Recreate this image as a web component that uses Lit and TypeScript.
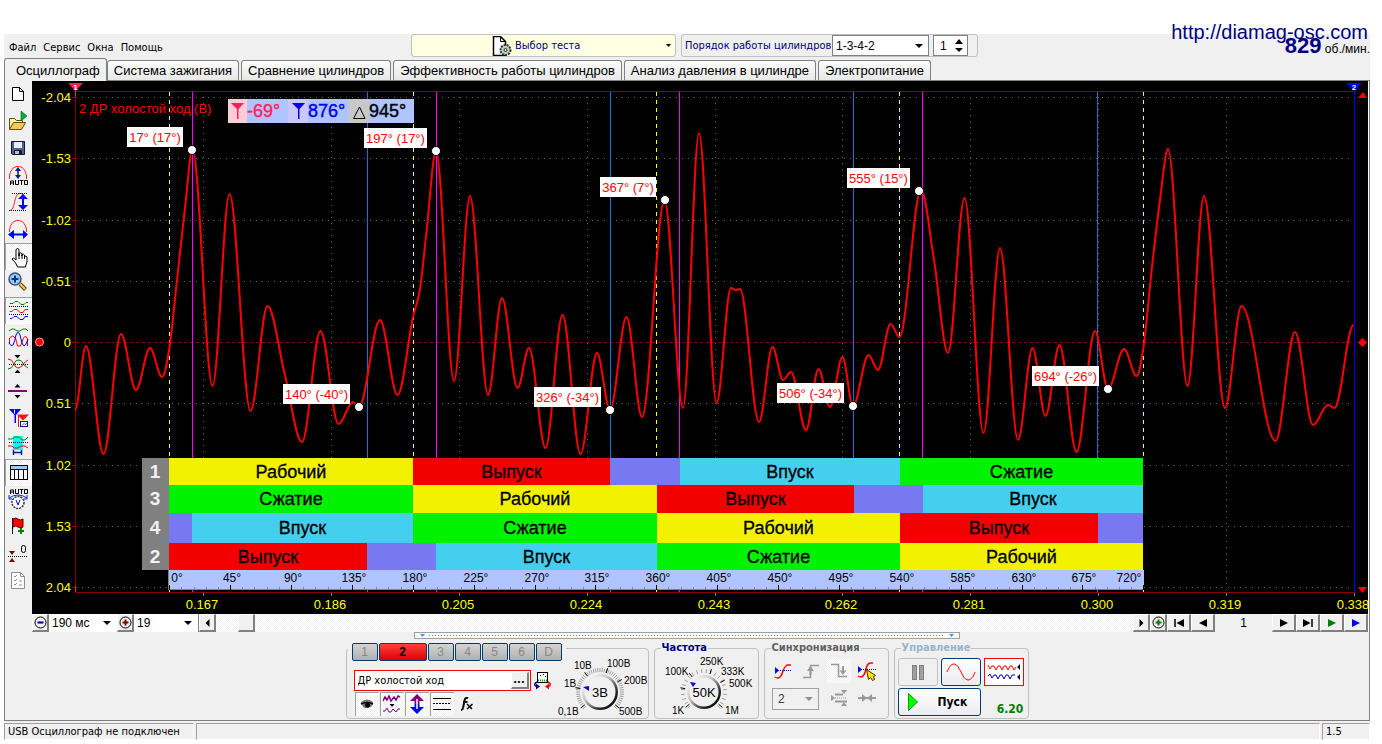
import { LitElement, html, svg, css } from "lit";
import { customElement } from "lit/decorators.js";
import { classMap } from "lit/directives/class-map.js";

type Point = [number, number];

/* Sampled turning points of the sensor voltage, in chart units. */
const TRACE: Point[] = [
  [75, 410], [86, 346], [103.5, 454], [121, 334], [136, 390], [150, 348], [162, 377],
  [169.5, 347], [177, 280], [185.5, 203], [192.5, 149], [212.5, 386], [229.5, 194], [250.5, 411],
  [267.5, 306], [284.5, 373], [302, 442], [320.5, 331], [338.5, 424], [353, 402], [359, 407],
  [380, 320], [397.5, 395], [413, 317], [420, 289], [427, 227], [436, 151], [454, 381],
  [470, 196], [488, 395], [502, 298], [517.5, 388], [529, 348], [545.5, 448], [562.5, 315],
  [580.5, 454], [597, 353], [610, 410], [626.5, 317], [642, 417], [664.5, 200], [683, 408],
  [699, 133], [716.5, 403], [731, 288], [735.5, 290], [740, 289], [759, 422], [772.5, 347],
  [783, 380], [791, 372], [806, 430], [818.5, 369], [830, 407], [842.5, 357], [853, 406],
  [868.5, 355], [878, 370], [890.5, 324], [899.5, 337], [921, 190], [934, 260], [948, 353],
  [964.5, 198], [983.5, 433], [1000, 248], [1018, 440], [1032.5, 348], [1045.5, 416],
  [1059.5, 345], [1076.5, 452], [1095, 331], [1108, 389], [1124, 349], [1136.5, 376],
  [1143.5, 347], [1152, 267], [1160, 200], [1168, 149], [1187.5, 386], [1204, 196],
  [1225, 408], [1241.5, 306], [1275.5, 441], [1295, 332], [1313, 425], [1328, 405],
  [1334.5, 408], [1353.5, 325],
];

/* Smooth path that is level at every peak and trough. */
function smooth(pts: Point[]): string {
  const slope = pts.map((p, i) => {
    if (i === 0 || i === pts.length - 1) return 0;
    const a = (p[1] - pts[i - 1][1]) / (p[0] - pts[i - 1][0]);
    const b = (pts[i + 1][1] - p[1]) / (pts[i + 1][0] - p[0]);
    return a * b <= 0 ? 0 : (a + b) / 2;
  });
  let d = `M${pts[0][0]} ${pts[0][1]}`;
  for (let i = 1; i < pts.length; i++) {
    const [x0, y0] = pts[i - 1];
    const [x1, y1] = pts[i];
    const h = (x1 - x0) * 0.35;
    d += `C${x0 + h} ${y0 + slope[i - 1] * h} ${x1 - h} ${y1 - slope[i] * h} ${x1} ${y1}`;
  }
  return d;
}

const CALLOUTS = [
  { x: 127, y: 127, w: 56, t: "17° (17°)", px: 192, py: 150 },
  { x: 364, y: 128, w: 63, t: "197° (17°)", px: 436, py: 151 },
  { x: 600, y: 177, w: 56, t: "367° (7°)", px: 665, py: 200 },
  { x: 847, y: 168, w: 63, t: "555° (15°)", px: 919, py: 191 },
  { x: 283, y: 384, w: 67, t: "140° (-40°)", px: 359, py: 407 },
  { x: 534, y: 387, w: 67, t: "326° (-34°)", px: 610, py: 410 },
  { x: 777, y: 383, w: 67, t: "506° (-34°)", px: 853, py: 406 },
  { x: 1032, y: 366, w: 67, t: "694° (-26°)", px: 1108, py: 389 },
];

const WORK = { t: "Рабочий", c: "#f2f200" };
const EXHAUST = { t: "Выпуск", c: "#f20000" };
const INTAKE = { t: "Впуск", c: "#45cfee" };
const COMPRESS = { t: "Сжатие", c: "#00f200" };
const OVERLAP = { t: "", c: "#7878f0" };
const PHASES = [
  { n: "1", y: 458, h: 27, cells: [[169, 413, WORK], [413, 610, EXHAUST], [610, 680, OVERLAP], [680, 900, INTAKE], [900, 1143, COMPRESS]] },
  { n: "3", y: 485, h: 28, cells: [[169, 413, COMPRESS], [413, 657, WORK], [657, 854, EXHAUST], [854, 923, OVERLAP], [923, 1143, INTAKE]] },
  { n: "4", y: 513, h: 30, cells: [[169, 192, OVERLAP], [192, 413, INTAKE], [413, 657, COMPRESS], [657, 900, WORK], [900, 1098, EXHAUST], [1098, 1143, OVERLAP]] },
  { n: "2", y: 543, h: 27, cells: [[169, 367, EXHAUST], [367, 436, OVERLAP], [436, 657, INTAKE], [657, 900, COMPRESS], [900, 1143, WORK]] },
] as { n: string; y: number; h: number; cells: [number, number, { t: string; c: string }][] }[];

const range = (n: number) => Array.from({ length: n }, (_, i) => i);
const degX = (deg: number) => 169.2 + deg * 1.353;

@customElement("scope-chart")
class ScopeChart extends LitElement {
  static styles = css`
    :host { display: block; background: #000; }
    .plot { display: block; width: 100%; height: auto; font-family: "Liberation Sans", Arial, sans-serif; font-size: 13px; }
    .crisp { shape-rendering: crispEdges; }
    .dots { stroke: #5c5c5c; stroke-dasharray: 1 5; }
    .frame { stroke: #8b0000; fill: none; }
    .zero { stroke: #880000; stroke-dasharray: 3 3; }
    .scale { fill: #ffff00; }
    .end { text-anchor: end; }
    .mid { text-anchor: middle; }
    .tdc { stroke: #ffff00; stroke-dasharray: 4 4; }
    .open { stroke: #ff00ff; }
    .close { stroke: #0a78e0; }
    .trace { fill: none; stroke: #ff0000; stroke-width: 2; stroke-linejoin: round; }
    .red { fill: #ff0000; }
    .phase { font-size: 18px; text-anchor: middle; fill: #000; stroke: #000; stroke-width: 0.3; }
    .cyl { font-size: 19px; font-weight: bold; text-anchor: middle; fill: #f2f2f2; }
    .deg { font-size: 12px; text-anchor: middle; fill: #000; }
    .read { font-size: 18px; stroke-width: 0.4; }
    .flag { font-size: 8px; font-weight: bold; fill: #fff; text-anchor: middle; }
  `;

  private vline(x: number, cls: string) {
    return svg`<path class="crisp ${cls}" d="M${x} 92V458M${x} 589V592" />`;
  }

  render() {
    return html`<svg class="plot" viewBox="32 81 1336 533" role="img" aria-label="Осциллограмма">
      <rect x="32" y="81" width="1336" height="533" fill="#000" />
      ${range(9).map((i) => {
        const y = Math.round(97 + i * 61.25) + 0.5;
        return i === 4 ? null : svg`<path class="crisp dots" d="M76 ${y}H1354" />`;
      })}
      ${range(10).map((i) => svg`<path class="crisp dots" d="M${Math.round(203.3 + i * 127.8) + 0.5} 97V592" />`)}
      <path class="crisp zero" d="M76 342.5H1354" />
      <path class="crisp frame" d="M75.5 91.5H1354V592.5H75.5Z" />
      ${["-2.04", "-1.53", "-1.02", "-0.51", "0", "0.51", "1.02", "1.53", "2.04"].map((t, i) => {
        const y = Math.round(97 + i * 61.25);
        return svg`<path class="crisp" stroke="#8b0000" d="M72 ${y + 0.5}H78" />
          <text class="scale end" x="71" y=${y + 5}>${t}</text>`;
      })}
      ${["0.167", "0.186", "0.205", "0.224", "0.243", "0.262", "0.281", "0.300", "0.319", "0.338"].map((t, i) => {
        const x = Math.round(203.3 + i * 127.8);
        return svg`<path class="crisp" stroke="#808080" d="M${x + 0.5} 593V596" />
          <text class="scale mid" x=${x - 1} y="609">${t}</text>`;
      })}
      ${[169.5, 413.5, 656.5, 899.5, 1143.5].map((x) => this.vline(x, "tdc"))}
      ${[192.5, 436.5, 679.5, 922.5].map((x) => this.vline(x, "open"))}
      ${[367.5, 610.5, 853.5, 1097.5].map((x) => this.vline(x, "close"))}
      <path class="trace" d=${smooth(TRACE)} />
      <text class="red" x="79" y="113">2 ДР холостой ход (В)</text>

      <g class="crisp">
        <rect x="228" y="99" width="186" height="24" fill="#b0c4ff" />
        <rect x="228" y="99" width="19" height="24" fill="#ffccd8" />
        <rect x="288" y="99" width="20" height="24" fill="#c8c8ff" />
        <rect x="349" y="99" width="20" height="24" fill="#c8c8c8" />
      </g>
      <path d="M231 103H244L238.500 109V119H237V109Z" fill="#ff1e5a" />
      <path d="M292 103H305L299.500 109V119H298V109Z" fill="#0000f0" />
      <path d="M353.500 118.500H365L359.500 107Z" fill="none" stroke="#000" />
      <text class="read" x="247" y="117" fill="#ff1e5a" stroke="#ff1e5a">-69°</text>
      <text class="read" x="308" y="117" fill="#0000f0" stroke="#0000f0">876°</text>
      <text class="read" x="369" y="117" fill="#000" stroke="#000">945°</text>

      ${CALLOUTS.map((c) => svg`
        <rect class="crisp" x=${c.x} y=${c.y} width=${c.w} height="20" fill="#fff" />
        <text class="red mid" x=${c.x + c.w / 2} y=${c.y + 15}>${c.t}</text>
        <circle cx=${c.px} cy=${c.py} r="4.500" fill="#fff" stroke="#000" />`)}

      <rect class="crisp" x="142" y="458" width="27" height="112" fill="#808080" />
      ${PHASES.map((r) => svg`
        ${r.cells.map(([a, b, k]) => svg`
          <rect class="crisp" x=${a} y=${r.y} width=${b - a} height=${r.h} fill=${k.c} />
          ${k.t ? svg`<text class="phase" x=${(a + b) / 2} y=${Math.round(r.y + r.h / 2) + 6}>${k.t}</text>` : null}`)}
        <text class="cyl" x="155" y=${Math.round(r.y + r.h / 2) + 6}>${r.n}</text>`)}
      <rect class="crisp" x="168" y="570" width="976" height="20" fill="#b0c4ff" />
      <path class="crisp" stroke="#808080" d="M168 589.500H1144M168.500 570V590" />
      ${range(81).map((i) => i % 5 === 0
        ? svg`<path class="crisp" stroke="#000" d="M${Math.round(degX(i * 9)) + 0.5} 585V590" />`
        : svg`<path class="crisp" stroke="#808080" d="M${Math.round(degX(i * 9)) + 0.5} 587V590" />`)}
      ${range(17).map((i) => {
        const x = i === 0 ? 177 : i === 16 ? 1129 : Math.round(degX(i * 45)) + 2;
        return svg`<text class="deg" x=${x} y="582">${i * 45}°</text>`;
      })}

      <path class="crisp" stroke="#ff1e5a" d="M75.500 90V97M75.500 586V592" />
      <path d="M68 83H83L75.500 91Z" fill="#ff1e5a" />
      <text class="flag" x="75.500" y="90">1</text>
      <rect class="crisp" x="1354" y="90" width="1" height="502" fill="#0000ff" />
      <path d="M1346 83H1362L1354 91Z" fill="#0000ff" />
      <text class="flag" x="1354" y="90">2</text>
      <path d="M1358 98L1363 92L1367 98ZM1358 587H1367L1362.500 593ZM1358 342.500L1362.500 338L1367 342.500L1362.500 347Z" fill="#ff0000" />
      <circle cx="39.500" cy="342" r="4" fill="#ff0000" stroke="#ff9c9c" />
    </svg>`;
  }
}

/* Icons of the side bar, each drawn on a 27 by 27 cell. */
const autoWord = (y: number) => svg`<path fill="none" stroke="#000" d="M5.500 ${y + 5}v-4h3v4M5.500 ${y + 3}h3M10.500 ${y}v4.500h3v-4.500M14.500 ${y + 0.5}h4M16.500 ${y}v5M19.500 ${y + 0.5}h3v4h-3z"/>`;
const dotted = (y: number) => svg`<path stroke="#000" stroke-dasharray="1 1" d="M4 ${y}H23"/>`;
const ICONS = [
  { n: "Новый", g: svg`<path d="M7.500 6.500h7l4 4v9h-11z" fill="#fff" stroke="#000"/><path d="M14.500 6.500v4h4" fill="none" stroke="#000"/>` },
  { n: "Открыть", g: svg`<path d="M4.500 21.500v-11h5l2 2h6v3" fill="#fff0a0" stroke="#605010"/><path d="M4.500 21.500l4-7h12l-4 7z" fill="#f0cc60" stroke="#605010"/><path d="M16 3v10l6-5z" fill="#00b030" stroke="#006010" stroke-width=".6"/>` },
  { n: "Сохранить", g: svg`<path d="M6.500 6.500h13v13h-12l-1-1z" fill="#50608c" stroke="#101830"/><path d="M9 7h8v6h-8z" fill="#e8f0ff"/><path d="M9.500 15.500h7v4h-7z" fill="#c0c0c0" stroke="#101830"/><path d="M14 16h2v3h-2z" fill="#101830"/>` },
  { n: "Авто", g: svg`<path d="M4.500 17v-3q1-8 7-9.500h3q6 1.500 7 9.500v3" fill="none" stroke="#ff2020"/><path d="M13 6v9" stroke="#001890" stroke-width="1.500"/><path d="M10 9l3-4 3 4zM10 13l3 4 3-4z" fill="#001890"/>${autoWord(18)}` },
  { n: "Амплитуда", g: svg`<path d="M4 21.500h1c5 0 4-16 9-17h2q2 0 3 2" fill="none" stroke="#ff2020"/><path stroke="#000" stroke-dasharray="1 1" d="M7 4.500H22M4 21.500H22"/><path d="M18 8v10" stroke="#0000f0" stroke-width="2"/><path d="M13 10l5-5 5 5zM13 16l5 5 5-5z" fill="#0000f0"/>` },
  { n: "Период", g: svg`<path d="M4.500 16v-2q1-8 7-9.500h3q6 1.500 7 9.500v2" fill="none" stroke="#ff2020"/><path d="M8 18.500h11" stroke="#0000f0" stroke-width="2"/><path d="M9 14v9l-6-4.500zM18 14v9l5-4.500z" fill="#0000f0"/>` },
  { n: "Рука", on: true, g: svg`<path d="M11 17V6.500q1.500-2 3 0V13v-2.500q1.500-1.500 3 0V13v-1.500q1.500-1 2.500.5v1.500q1.500-1 2.500.5v5q-1 2-1.500 5h-8q-1-4-5.500-8 1-2.500 4 1z" fill="#fff" stroke="#000"/><path d="M14 10v6M17 12v4M19.500 13v3" stroke="#000"/>` },
  { n: "Лупа", g: svg`<path d="M15 14l5.500 5.500" stroke="#604800" stroke-width="4"/><path d="M15 14l5 5" stroke="#e8c860" stroke-width="2"/><circle cx="10" cy="9" r="6" fill="#90d0f8" stroke="#405070" stroke-width="1.500"/><path d="M10 5.500v7M6.500 9h7" stroke="#003090" stroke-width="2"/>` },
  { n: "Раздельно", on: true, g: svg`<path d="M5 6.500l3 0 2-2h3l3 3h3l2-2h2" fill="none" stroke="#008000"/><path d="M5 14.500h2l2-2h3l3 3h3l2-3h3" fill="none" stroke="#ff0000"/><path d="M5 21.500h2l2-2h3l3 3h3l2-3h3" fill="none" stroke="#0000ff"/>${dotted(9.500)}${dotted(17.500)}` },
  { n: "Совместно", g: svg`<path d="M4 7l3-2h2l3 2h3l3-2h3l2 2" fill="none" stroke="#008000"/><path d="M4.500 20v-6l3-2 3 2 2 8h3l3-8 2-2 2 3v7" fill="none" stroke="#ff0000"/><path d="M4 18q1.500 5 4 3 2-4 3-10 2-5 4 0l2 8q2 5 4 1l2-5" fill="none" stroke="#0000ff"/>` },
  { n: "Сжать по вертикали", g: svg`<path d="M3 8q4 0 6 5t5 4q3-1 5-5l4-3" fill="none" stroke="#ff0000"/><path d="M3 18q4 0 6-5t5-4q3 0 5 5l4 3" fill="none" stroke="#008000"/>${dotted(13.500)}<path d="M9.500 4h6l-3 3.500zM9.500 22h6l-3-3.500z"/>` },
  { n: "Раздвинуть", g: svg`<path d="M3 13h19" stroke="#800080" stroke-width="2"/><path d="M9.500 9.500h6l-3-3.500zM9.500 17h6l-3 3.500z"/>` },
  { n: "Маркеры", g: svg`<path d="M12 9.500h12l-6 6z" fill="#ff1010"/><path d="M13.500 10v12" stroke="#ff1010"/><path d="M4 4h12l-5 6v8h-1.500v-8z" fill="#0000ff"/><path d="M9.500 4.500v4" stroke="#fff"/><rect x="15.500" y="16.500" width="7" height="5" fill="#fff" stroke="#001890"/><path d="M17 20.500l2-2 1 1 2-1" fill="none" stroke="#555"/>` },
  { n: "Измерение", g: svg`<path d="M8 4h10v14H8z" fill="#00ffff"/><path d="M3 7h4l3-2h4l3 3h3l3-3" fill="none" stroke="#008000"/><path d="M3 14h4l2 2h4l3-2h4l3 2" fill="none" stroke="#ff0000"/>${dotted(10.500)}<path d="M8 20.500h9M8.500 18v5M16.500 18v5" stroke="#001890" stroke-width="1.500"/>` },
  { n: "Таблица", on: true, g: svg`<rect x="5.500" y="6.500" width="17" height="14" fill="#fff" stroke="#000"/><path d="M6 7h16v3H6z" fill="#a0c8ff"/><path d="M5 10.500h18M9.500 10v10M13.500 10v10M18.500 10v10" stroke="#000"/>` },
  { n: "Автонастройка", g: svg`${autoWord(3)}<path d="M4 12q9-6 18 0M4 9v4h3M22 9v4h-3" fill="none" stroke="#0030c0"/><circle cx="13" cy="16.500" r="6" fill="#fff" stroke="#333" stroke-dasharray="2 1" stroke-width="1.500"/><path d="M11 14l2 5 2-5" fill="none" stroke="#0000ff"/>` },
  { n: "Флаг", g: svg`<path d="M7.500 5v16" stroke="#000"/><path d="M8 6q3-2 5 0t5 0v8q-3 2-5 0t-5 0z" fill="#ff0000" stroke="#600000"/><path d="M16 15v6M13 18h6" stroke="#008000" stroke-width="2"/>` },
  { n: "Ноль", g: svg`<path d="M4 11h6l-3 4zM4 22h6l-3-4z" fill="#800000"/><path stroke="#000" stroke-dasharray="1 1" d="M3 16.500H22"/><rect x="16.500" y="5.500" width="4" height="7" rx="2" fill="none" stroke="#000"/>` },
  { n: "Отчёт", g: svg`<path d="M6.500 5.500h9l4 4v12h-13z" fill="#fff" stroke="#909090"/><path d="M15.500 5.500v4h4M9 9l1 1 2-2M9 13l1 1 2-2M9 17l1 1 2-2M14 14h3M14 18h3" fill="none" stroke="#909090"/>` },
];

const CHANNELS = ["1", "2", "3", "4", "5", "6", "D"];
const TABS = ["Осциллограф", "Система зажигания", "Сравнение цилиндров", "Эффективность работы цилиндров", "Анализ давления в цилиндре", "Электропитание"];

type Mark = { t: string; x: number; y: number };
const V_MARKS: Mark[] = [
  { t: "0,1В", x: 559, y: 715 }, { t: "1В", x: 565, y: 687 }, { t: "10В", x: 575, y: 669 },
  { t: "100В", x: 608, y: 667 }, { t: "200В", x: 625, y: 684 }, { t: "500В", x: 620, y: 715 },
];
const F_MARKS: Mark[] = [
  { t: "1K", x: 672, y: 714 }, { t: "100K", x: 665, y: 675 }, { t: "250K", x: 700, y: 665 },
  { t: "333K", x: 721, y: 675 }, { t: "500K", x: 729, y: 687 }, { t: "1M", x: 725, y: 714 },
];

@customElement("app-root")
class AppRoot extends LitElement {
  static styles = css`
    :host { display: block; font: 11px/13px "DejaVu Sans Condensed", "Liberation Sans", sans-serif; color: #000; background: #fff; padding: 34px 12px 4px 4px; }
    * { box-sizing: border-box; }
    button, select, input { font: inherit; color: inherit; margin: 0; padding: 0; border-radius: 0; outline: 0; }
    svg { display: block; flex: none; }
    .win { background: #f0f0f0; }

    .top { display: grid; grid-template-columns: 407px 265px 302px 1fr; height: 24px; }
    .menu { display: flex; align-items: center; gap: 7px; padding-left: 5px; }
    .menu button { border: 0; background: none; height: 20px; }
    .test { display: flex; align-items: center; background: #ffffe1; border: 1px solid #c0c0c0; border-radius: 3px; color: #000080; height: 23px; padding: 0 4px 0 80px; gap: 3px; }
    .test span { flex: 1; text-align: left; }
    .order { display: flex; align-items: center; border: 1px solid #c0c0c0; border-radius: 3px; color: #000080; height: 23px; margin-left: 5px; padding: 0 9px 0 3px; }
    .order label { flex: 1; white-space: nowrap; }
    .pick { position: relative; display: flex; flex: none; }
    .pick::after { content: ""; position: absolute; right: 6px; top: 50%; margin-top: -2px; border: 4px solid transparent; border-top-color: #000; border-bottom: 0; pointer-events: none; }
    .pick select { appearance: none; background: #fff; border: 0; color: #000; width: 100%; padding-left: 3px; font: 12px "Liberation Sans", sans-serif; }
    .pick.seq { width: 97px; height: 21px; }
    .pick.seq select { border: 1px solid #808080; }
    .spin { width: 35px; height: 21px; border: 1px solid #808080; background: #fff; display: flex; align-items: center; padding-right: 4px; margin-left: 4px; flex: none; }
    .spin input { width: 20px; flex: 1; border: 0; background: none; padding-left: 6px; font: 12px "Liberation Sans", sans-serif; color: #000; }
    .rpm { position: relative; text-align: right; color: #000; font-family: "Liberation Sans", sans-serif; font-size: 12px; line-height: 24px; white-space: nowrap; }
    .rpm b { font-size: 22px; color: #000080; }
    .rpm a { position: absolute; right: 2px; top: -14px; font-size: 20px; color: #000080; text-decoration: none; }

    .tabs { display: flex; align-items: flex-end; gap: 2px; height: 23px; border-bottom: 1px solid #808080; }
    .tab { height: 20px; border: 1px solid #808080; border-bottom: 0; border-radius: 3px 3px 0 0; background: linear-gradient(#fcfcfc, #e8e8e8); padding: 0 6px; font: 13px "Liberation Sans", sans-serif; white-space: nowrap; }
    .tab.on { height: 23px; margin: 0 -2px -1px 0; background: #f0f0f0; padding: 0 6px 0 11px; }

    .frame { border: solid #808080; border-width: 0 1px 1px 1px; }
    .work { display: flex; align-items: flex-start; }
    .side { width: 27px; flex: none; }
    .tool { display: block; width: 27px; height: 27px; border: 0; background: none; }
    .check { background: conic-gradient(#fff 25%, #f0f0f0 0 50%, #fff 0 75%, #f0f0f0 0) 0 0 / 2px 2px; }
    .tool.on { box-shadow: inset 1px 1px #a0a0a0, inset -1px -1px #fff; }
    .main { flex: 1; min-width: 0; border-right: 1px solid #fff; }

    .nav { display: flex; height: 18px; background: #fff; }
    .bevel { background: #f0f0f0; border: solid; border-width: 1px 2px 2px 1px; border-color: #fff #808080 #808080 #fff; display: grid; place-items: center; flex: none; }
    .w17 { width: 17px; } .w24 { width: 24px; }
    .pick.span { width: 68px; } .pick.step { width: 65px; border-right: 1px solid #808080; }
    .track { flex: 1; padding-left: 22px; display: flex; }
    .pageno { width: 57px; background: #f0f0f0; border: 0; text-align: center; font: 12px "Liberation Sans", sans-serif; flex: none; }

    .split { width: 546px; height: 7px; margin: 0 auto; border: 1px solid #a0a0a0; background: #fff; display: flex; align-items: center; justify-content: space-between; padding: 0 5px; gap: 4px; }
    .split i { flex: 1; height: 1px; background: repeating-linear-gradient(90deg, #3399ff 0 1px, #fff 1px 3px); }
    .deck { display: flex; justify-content: center; gap: 5px; padding: 3px 0 1px; }
    .panel { margin: 0; padding: 0; min-width: 0; height: 77px; border: 1px solid #c0c0c0; border-radius: 4px; }
    .panel legend { height: 12px; line-height: 12px; font-weight: bold; padding: 0 1px; margin-left: 6px; }
    .in { width: 303px; } .freq { width: 105px; } .sync { width: 125px; } .ctl { width: 135px; }
    .freq legend { color: #000080; } .sync legend { color: #606060; } .ctl legend { color: #99b4d1; }
    .in .chans { display: flex; gap: 1px; padding: 1px 4px 0; margin-left: 1px; }
    .chan { width: 26px; height: 18px; flex: none; border: 1px solid #003c74; border-radius: 2px; background: linear-gradient(#d4d4d4, #b0b0b0); color: #888; font: 12px "Liberation Sans", sans-serif; }
    .chan.on { width: 48px; background: linear-gradient(#ff4040, #e00000); color: #000; font-weight: bold; }
    .split2 { display: flex; justify-content: space-between; height: 64px; }
    .left { padding: 14px 0 0 7px; }
    .row { display: flex; align-items: center; }
    .name { width: 177px; height: 21px; border: 1px solid #ff0000; background: #fff; display: flex; padding: 1px; }
    .name input { flex: 1; min-width: 0; border: 0; background: none; padding-left: 2px; }
    .name button { width: 18px; height: 17px; font-weight: bold; line-height: 8px; }
    .icons { gap: 1px; padding-left: 1px; }
    .cell { width: 24px; height: 24px; border: 0; padding: 0; background: none; display: grid; place-items: center; }
    .cell.check { background: conic-gradient(#fff 25%, #f0f0f0 0 50%, #fff 0 75%, #f0f0f0 0) 0 0 / 2px 2px; }
    .cell.on { box-shadow: inset 1px 1px #a0a0a0; }
    .dial { font-family: "Liberation Sans", sans-serif; font-size: 10px; }
    .val { font-size: 13px; text-anchor: middle; }
    .sgrid { display: grid; grid-template-columns: 24px 24px 24px 24px; justify-content: center; gap: 4px; row-gap: 3px; padding-top: 5px; padding-right: 2px; }
    .pick.two { grid-column: span 2; height: 22px; width: 47px; margin: 2px 0 0 1px; }
    .pick.two select { background: #f0f0f0; border: 1px solid #a0a0a0; color: #404040; padding-left: 5px; font-size: 12px; }
    .pick.two::after { border-top-color: #909090; }
    .cgrid { display: grid; grid-template-columns: 40px 40px 40px; gap: 2px 3px; padding: 4px 3px; }
    .big { height: 28px; border: 1px solid #003c74; border-radius: 3px; background: linear-gradient(#fff, #ececf0); display: grid; place-items: center; }
    .big.off { border-color: #c0c0c0; background: #f0f0f0; }
    .big.red { border: 1px solid #ff0000; border-radius: 0; background: #fff; }
    .start { grid-column: span 2; display: flex; align-items: center; gap: 20px; padding-left: 9px; font-weight: bold; font-size: 12px; }
    .volt { align-self: end; color: #008000; font-weight: bold; font-size: 12px; text-align: center; margin-left: 13px; }

    .status { display: grid; grid-template-columns: 190px 1fr 48px; gap: 2px; padding-top: 2px; height: 19px; }
    .status span { border: 1px solid; border-color: #a0a0a0 #fff #fff #a0a0a0; padding: 1px 3px 0; line-height: 13px; white-space: nowrap; }
    @media (max-width: 1100px) { .deck { flex-wrap: wrap; } .top { grid-template-columns: auto 1fr 302px 1fr; height: auto; } .tabs { height: auto; flex-wrap: wrap; } }
  `;

  private dial(cx: number, cy: number, r: number, value: string, marks: Mark[], box: string, w: number, n: number, needle: string) {
    const start = (135 * Math.PI) / 180;
    const step = ((270 / (n - 1)) * Math.PI) / 180;
    return html`<svg class="dial" width=${w} height="64" viewBox=${box} role="img" aria-label=${value}>
      <defs>
        <linearGradient id="rim" x1="0.100" y1="0.100" x2="0.900" y2="0.900">
          <stop offset="0" stop-color="#fff" /><stop offset="0.400" stop-color="#c0c0c0" /><stop offset="0.750" stop-color="#303030" /><stop offset="1" stop-color="#000" />
        </linearGradient>
      </defs>
      ${range(n).map((i) => {
        const a = start + i * step;
        const p = (q: number) => `${(cx + Math.cos(a) * q).toFixed(1)} ${(cy + Math.sin(a) * q).toFixed(1)}`;
        return svg`<path stroke="#a0a0a0" d="M${p(r + 2)}L${p(r + 6)}" />`;
      })}
      ${[140, 190, 232, 288, 330, 400].map((g) => {
        const a = (g * Math.PI) / 180;
        const p = (q: number) => `${(cx + Math.cos(a) * q).toFixed(1)} ${(cy + Math.sin(a) * q).toFixed(1)}`;
        return svg`<path stroke="#000" d="M${p(r + 2)}L${p(r + 7)}" />`;
      })}
      <circle cx=${cx} cy=${cy} r=${r} fill="url(#rim)" />
      <circle cx=${cx} cy=${cy} r=${r - 2.5} fill="#f0f0f0" />
      <path fill="#0000ff" d=${needle} />
      <text class="val" x=${cx} y=${cy + 5}>${value}</text>
      ${marks.map((m) => svg`<text x=${m.x} y=${m.y}>${m.t}</text>`)}
    </svg>`;
  }

  private glyph(w: number, h: number, body: unknown) {
    return html`<svg width=${w} height=${h} viewBox="0 0 ${w} ${h}" fill="none" aria-hidden="true">${body}</svg>`;
  }

  render() {
    const g = this.glyph;
    return html`<div class="win">
      <header class="top">
        <nav class="menu">${["Файл", "Сервис", "Окна", "Помощь"].map((t) => html`<button>${t}</button>`)}</nav>
        <button class="test">
          ${g(20, 20, svg`<path d="M1.500 .500h7l5 5v14h-12z" fill="#fff" stroke="#000" stroke-width="1.500"/><path d="M8.500 .500v5h5" stroke="#000"/><circle cx="13.500" cy="14" r="5" fill="#b8d4b8" stroke="#333" stroke-width="2" stroke-dasharray="2 1"/><circle cx="13.500" cy="14" r="1.500" fill="#fff" stroke="#222"/>`)}
          <span>Выбор теста</span>
          ${g(5, 3, svg`<path d="M0 0h5L2.500 3z" fill="#000"/>`)}
        </button>
        <div class="order">
          <label for="seq">Порядок работы цилиндров</label>
          <div class="pick seq"><select id="seq"><option>1-3-4-2</option></select></div>
          <div class="spin"><input aria-label="Цилиндр" value="1" />${g(8, 13, svg`<path d="M0 5h8L4 0zM0 9h8l-4 4z" fill="#000"/>`)}</div>
        </div>
        <div class="rpm"><a href="http://diamag-osc.com">http://diamag-osc.com</a><b>829</b> об./мин.</div>
      </header>
      <div class="tabs" role="tablist">
        ${TABS.map((t, i) => html`<button role="tab" class=${classMap({ tab: true, on: i === 0 })}>${t}</button>`)}
      </div>
      <div class="frame">
        <div class="work">
          <div class="side" role="toolbar">
            ${ICONS.map((ic) => html`<button class=${classMap({ tool: true, on: !!ic.on, check: !!ic.on })} aria-label=${ic.n}><svg width="27" height="27" viewBox="0 0 27 27">${ic.g}</svg></button>`)}
          </div>
          <div class="main">
            <scope-chart></scope-chart>
            <div class="nav">
              <button class="bevel w17" aria-label="Уменьшить">${g(13, 13, svg`<circle cx="6.500" cy="6.500" r="5.500" stroke="#000"/><path d="M3.500 6.500h6" stroke="#000080" stroke-width="2"/>`)}</button>
              <div class="pick span"><select aria-label="Развёртка"><option>190 мс</option></select></div>
              <button class="bevel w17" aria-label="Увеличить">${g(13, 13, svg`<circle cx="6.500" cy="6.500" r="5.500" stroke="#000"/><path d="M3.500 6.500h6M6.500 3.500v6" stroke="#800000" stroke-width="2"/>`)}</button>
              <div class="pick step"><select aria-label="Шаг"><option>19</option></select></div>
              <button class="bevel w17" aria-label="Влево">${g(5, 8, svg`<path d="M4.500 0v8L.500 4z" fill="#000"/>`)}</button>
              <div class="track check"><div class="bevel w17"></div></div>
              <button class="bevel w17" aria-label="Вправо">${g(5, 8, svg`<path d="M.500 0v8l4-4z" fill="#000"/>`)}</button>
              <button class="bevel w17" aria-label="Добавить">${g(13, 13, svg`<circle cx="6.500" cy="6.500" r="5.500" stroke="#000"/><path d="M3.500 6.500h6M6.500 3.500v6" stroke="#008000" stroke-width="2"/>`)}</button>
              <button class="bevel w24" aria-label="В начало">${g(10, 8, svg`<path d="M1 0v8" stroke="#000" stroke-width="1.500"/><path d="M10 0v8L2.500 4z" fill="#000"/>`)}</button>
              <button class="bevel w24" aria-label="Назад">${g(8, 8, svg`<path d="M8 0v8L0 4z" fill="#000"/>`)}</button>
              <input class="pageno" aria-label="Кадр" value="1" />
              <button class="bevel w24" aria-label="Вперёд">${g(8, 8, svg`<path d="M0 0v8l8-4z" fill="#000"/>`)}</button>
              <button class="bevel w24" aria-label="В конец">${g(10, 8, svg`<path d="M9 0v8" stroke="#000" stroke-width="1.500"/><path d="M0 0v8l7.500-4z" fill="#000"/>`)}</button>
              <button class="bevel w24" aria-label="Проиграть">${g(8, 8, svg`<path d="M0 0v8l8-4z" fill="#008000"/>`)}</button>
              <button class="bevel w24" aria-label="Далее">${g(8, 8, svg`<path d="M0 0v8l8-4z" fill="#0000ff"/>`)}</button>
            </div>
          </div>
        </div>
        <div class="split">
          ${g(5, 3, svg`<path d="M0 0h5L2.500 3z" fill="#3399ff"/>`)}<i></i>${g(5, 3, svg`<path d="M0 0h5L2.500 3z" fill="#3399ff"/>`)}
        </div>
        <div class="deck">
          <fieldset class="panel in">
            <legend class="chans">${CHANNELS.map((c, i) => html`<button class=${classMap({ chan: true, on: i === 1 })}>${c}</button>`)}</legend>
            <div class="split2">
              <div class="left">
                <div class="row">
                  <div class="name"><input aria-label="Датчик" value="ДР холостой ход" /><button class="bevel">...</button></div>
                  <button class="cell" aria-label="Датчики">${g(20, 19, svg`<rect x="4.500" y="1.500" width="10" height="10" fill="#fff" stroke="#000"/><path d="M5 9.500h9" stroke="#00a000" stroke-dasharray="1 1" stroke-width="2"/><path d="M7 4.500h1M10 3.500h1M12 5.500h1" stroke="#000"/><path d="M4 11Q0 13 3 15.500" stroke="#000080" stroke-width="1.500"/><path d="M3 12.500v6l4-3z" fill="#000080"/><path d="M15 11q4 2 1 4.500" stroke="#ff0000" stroke-width="1.500"/><path d="M16 12.500v6l-4-3z" fill="#ff0000"/>`)}</button>
                </div>
                <div class="row icons">
                  <button class="cell on check" aria-label="Показать">${g(14, 12, svg`<path d="M1 4q6-5 12 0l-1 4q-5 4-9 1z" fill="#777"/><path d="M1 6q6-3 12 0" stroke="#000" stroke-width="1.500"/><circle cx="7.500" cy="7" r="2.500" fill="#000"/>`)}</button>
                  <button class="cell on check" aria-label="Фильтр">${g(18, 18, svg`<path d="M0 6l2-4 2 3 2-4 2 5 3-4 2 3 2-4 2 1" stroke="#800080" stroke-width="1.500"/><path d="M6.500 9h5L9 12z" fill="#000"/><path d="M0 16h2l2-3 2 4h2l2-3 3 3 2-3h2" stroke="#800080"/>`)}</button>
                  <button class="cell on check" aria-label="Инверсия">${g(16, 20, svg`<path d="M8 0l7 7h-4.500v3h-5v-3H1z" fill="#800080"/><path d="M8 20l7-7h-4.500v-3h-5v3H1z" fill="#0000ff"/><path d="M8 5v10" stroke="#fff" stroke-width="1.500"/>`)}</button>
                  <button class="cell on check" aria-label="Линии">${g(18, 14, svg`<path d="M0 1.500h18M0 12.500h18" stroke="#000"/><path d="M0 6.500h18" stroke="#000" stroke-dasharray="2 1"/>`)}</button>
                  <button class="cell" aria-label="Функция">${g(14, 14, svg`<path d="M8 1q-3-1-3.500 3l-1.500 7q-.500 2-2 2M3 5h4.500" stroke="#000" stroke-width="2"/><path d="M7 7l5 5M12.500 7l-5.500 5" stroke="#000" stroke-width="1.500"/>`)}</button>
                </div>
              </div>
              ${this.dial(601, 692, 18, "3В", V_MARKS, "556 654 93 64", 93, 49, "M584 687l6-1v5z")}
            </div>
          </fieldset>
          <fieldset class="panel freq"><legend>Частота</legend>
            ${this.dial(704, 692, 17, "50K", F_MARKS, "655 654 103 64", 103, 22, "M690 682l6 1-3 4z")}
          </fieldset>
          <fieldset class="panel sync"><legend>Синхронизация</legend>
            <div class="sgrid">
              <button class="cell" aria-label="По уровню">${g(18, 18, svg`<path d="M1 15q3 2 5 0 2-2 3-6t4-6h4" stroke="#ff0000" stroke-width="1.500"/><path d="M4 8.500h13" stroke="#0000a0" stroke-dasharray="1 1"/><path d="M1 5v7l4-3.500z" fill="#0000ff"/>`)}</button>
              <button class="cell" aria-label="По фронту">${g(18, 16, svg`<path d="M1 14.500h7.500v-12H17" stroke="#999" stroke-width="1.500"/><path d="M8.500 4v8" stroke="#999" stroke-width="2"/><path d="M5 8h7L8.500 3z" fill="#999"/>`)}</button>
              <button class="cell check" aria-label="По спаду">${g(18, 16, svg`<path d="M1 1.500h7.500v12H17" stroke="#999" stroke-width="1.500"/><path d="M13 3v6" stroke="#999" stroke-width="2"/><path d="M9.500 7.500h7L13 12z" fill="#999"/>`)}</button>
              <button class="cell" aria-label="Ручная">${g(20, 20, svg`<path d="M1 15q3 2 5 0 2-2 3-7t4-6h3" stroke="#ff0000" stroke-width="1.500"/><path d="M4 8.500h15" stroke="#0000a0" stroke-dasharray="1 1"/><path d="M1 5v7l4-3.500z" fill="#0000ff"/><path d="M9.500 8.500l2 10 2-2 2 3 2-1-1-3 2-1z" fill="#ffe000" stroke="#403000"/>`)}</button>
              <div class="pick two"><select aria-label="Канал"><option>2</option></select></div>
              <button class="cell" aria-label="Сжать">${g(18, 18, svg`<path d="M5 5.500h8M5 12.500h12" stroke="#999" stroke-width="2"/><path d="M1 6v6l4-3z" fill="#999"/><path d="M5 9h12" stroke="#999" stroke-dasharray="1 1"/><path d="M11 1h6l-3 4zM11 17h6l-3-4z" fill="#999"/>`)}</button>
              <button class="cell" aria-label="Свести">${g(18, 10, svg`<path d="M0 5h18" stroke="#999" stroke-width="2"/><path d="M4 1v8l5-4zM14 1v8L9 5z" fill="#999"/>`)}</button>
            </div>
          </fieldset>
          <fieldset class="panel ctl"><legend>Управление</legend>
            <div class="cgrid">
              <button class="big off" aria-label="Пауза">${g(12, 15, svg`<rect x=".500" y=".500" width="4" height="14" fill="#a0a0a0" stroke="#808080"/><rect x="7.500" y=".500" width="4" height="14" fill="#a0a0a0" stroke="#808080"/>`)}</button>
              <button class="big" aria-label="Синус">${g(30, 18, svg`<path d="M1 9C3 4 5 1 8 1c6 0 8 16 14 16 3 0 6-4 7-8" stroke="#ff0000"/>`)}</button>
              <button class="big red" aria-label="Запись">${g(34, 20, svg`<path d="M1 3l2 4 2-3h2l2 4 2-4h2l2 4 2-4h2l2 4 2-4h2l2 4 2-3" stroke="#ff0000"/><path d="M1 14l2-2 2 4 2-3h2l2 4 2-4h2l2 4 2-4h2l2 4 2-4h3" stroke="#0000b0"/><path d="M33 2v6l-3-3zM33 12v6l-3-3z" fill="#000060"/>`)}</button>
              <button class="big start">${g(10, 18, svg`<path d="M.500 .500v17l9-8.500z" fill="#00ff00" stroke="#00a000"/>`)}<span>Пуск</span></button>
              <div class="volt">6.20</div>
            </div>
          </fieldset>
        </div>
      </div>
      <footer class="status"><span>USB Осциллограф не подключен</span><span></span><span>1.5</span></footer>
    </div>`;
  }
}
